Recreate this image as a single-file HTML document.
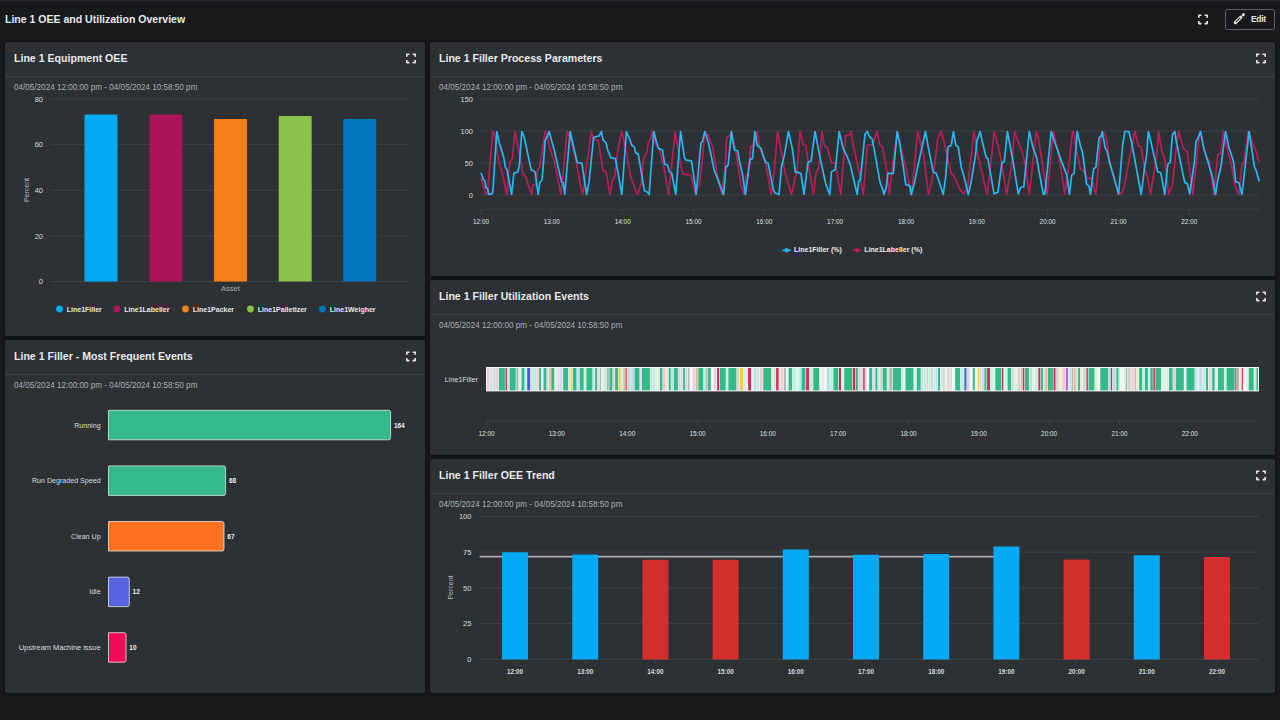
<!DOCTYPE html><html><head><meta charset="utf-8"><style>
html,body{margin:0;padding:0;width:1280px;height:720px;overflow:hidden;background:#18191b;font-family:"Liberation Sans", sans-serif;}
.p{position:absolute;background:#2d3134;border-radius:2px;box-shadow:0 0 2px 1px rgba(0,0,0,0.35);}
.hd{position:absolute;left:0;top:0;right:0;height:35px;border-bottom:1px solid #3a3f43;box-sizing:border-box;}
.tt{position:absolute;left:9px;top:10px;font-size:11.5px;font-weight:bold;color:#e9eaeb;white-space:nowrap;line-height:13px;transform:scaleX(0.92);transform-origin:0 0;}
.dt{position:absolute;left:9px;top:41px;font-size:8.15px;color:#abaeb1;white-space:nowrap;line-height:10px;}
svg text{font-family:"Liberation Sans", sans-serif;}
</style></head><body>
<div style="position:absolute;left:0;top:0;width:1280px;height:1px;background:#27292c"></div>
<div style="position:absolute;left:5px;top:13px;font-size:11.5px;font-weight:bold;color:#e9eaeb;white-space:nowrap;line-height:13px;transform:scaleX(0.915);transform-origin:0 0">Line 1 OEE and Utilization Overview</div>
<svg style="position:absolute;left:1198px;top:14px" width="10" height="11" viewBox="0 -0.4 10 11"><path d="M0.8 3.4V0.8H3.4M6.6 0.8H9.2V3.4M9.2 6.6V9.2H6.6M3.4 9.2H0.8V6.6" fill="none" stroke="#e6e6e6" stroke-width="1.6" stroke-linejoin="round"/></svg>
<div style="position:absolute;left:1225px;top:9px;width:50px;height:21px;box-sizing:border-box;border:1px solid #5d6064;border-radius:2.5px;"></div>
<svg style="position:absolute;left:1233px;top:13px" width="13" height="13" viewBox="0 0 13 13"><line x1="2.4" y1="9.6" x2="7.7" y2="4.3" stroke="#e6e6e6" stroke-width="3.3" stroke-linecap="round"/><line x1="2.9" y1="9.1" x2="7.3" y2="4.7" stroke="#2a2c2e" stroke-width="1.1"/><line x1="10" y1="2" x2="10.5" y2="1.5" stroke="#e6e6e6" stroke-width="2.7" stroke-linecap="round"/></svg>
<div style="position:absolute;left:1251px;top:14px;font-size:8.5px;font-weight:bold;letter-spacing:-0.35px;color:#e8e8e8;line-height:10px">Edit</div>

<div class="p" style="left:5px;top:42px;width:420px;height:294px"><div class="hd"></div><div class="tt">Line 1 Equipment OEE</div><div class="dt">04/05/2024 12:00:00 pm - 04/05/2024 10:58:50 pm</div><svg style="position:absolute;left:401px;top:11px" width="10" height="11" viewBox="0 -0.4 10 11"><path d="M0.8 3.4V0.8H3.4M6.6 0.8H9.2V3.4M9.2 6.6V9.2H6.6M3.4 9.2H0.8V6.6" fill="none" stroke="#e6e6e6" stroke-width="1.6" stroke-linejoin="round"/></svg></div>
<div class="p" style="left:5px;top:340px;width:420px;height:353px"><div class="hd"></div><div class="tt">Line 1 Filler - Most Frequent Events</div><div class="dt">04/05/2024 12:00:00 pm - 04/05/2024 10:58:50 pm</div><svg style="position:absolute;left:401px;top:11px" width="10" height="11" viewBox="0 -0.4 10 11"><path d="M0.8 3.4V0.8H3.4M6.6 0.8H9.2V3.4M9.2 6.6V9.2H6.6M3.4 9.2H0.8V6.6" fill="none" stroke="#e6e6e6" stroke-width="1.6" stroke-linejoin="round"/></svg></div>
<div class="p" style="left:430px;top:42px;width:845px;height:234px"><div class="hd"></div><div class="tt">Line 1 Filler Process Parameters</div><div class="dt">04/05/2024 12:00:00 pm - 04/05/2024 10:58:50 pm</div><svg style="position:absolute;left:826px;top:11px" width="10" height="11" viewBox="0 -0.4 10 11"><path d="M0.8 3.4V0.8H3.4M6.6 0.8H9.2V3.4M9.2 6.6V9.2H6.6M3.4 9.2H0.8V6.6" fill="none" stroke="#e6e6e6" stroke-width="1.6" stroke-linejoin="round"/></svg></div>
<div class="p" style="left:430px;top:280px;width:845px;height:175px"><div class="hd"></div><div class="tt">Line 1 Filler Utilization Events</div><div class="dt">04/05/2024 12:00:00 pm - 04/05/2024 10:58:50 pm</div><svg style="position:absolute;left:826px;top:11px" width="10" height="11" viewBox="0 -0.4 10 11"><path d="M0.8 3.4V0.8H3.4M6.6 0.8H9.2V3.4M9.2 6.6V9.2H6.6M3.4 9.2H0.8V6.6" fill="none" stroke="#e6e6e6" stroke-width="1.6" stroke-linejoin="round"/></svg></div>
<div class="p" style="left:430px;top:459px;width:845px;height:234px"><div class="hd"></div><div class="tt">Line 1 Filler OEE Trend</div><div class="dt">04/05/2024 12:00:00 pm - 04/05/2024 10:58:50 pm</div><svg style="position:absolute;left:826px;top:11px" width="10" height="11" viewBox="0 -0.4 10 11"><path d="M0.8 3.4V0.8H3.4M6.6 0.8H9.2V3.4M9.2 6.6V9.2H6.6M3.4 9.2H0.8V6.6" fill="none" stroke="#e6e6e6" stroke-width="1.6" stroke-linejoin="round"/></svg></div>
<svg style="position:absolute;left:0;top:0" width="1280" height="720" viewBox="0 0 1280 720"><line x1="50.5" y1="99.0" x2="409.5" y2="99.0" stroke="#3d4146" stroke-width="1"/><text x="43" y="101.6" font-size="7.5" fill="#dadcde" text-anchor="end">80</text><line x1="50.5" y1="144.6" x2="409.5" y2="144.6" stroke="#3d4146" stroke-width="1"/><text x="43" y="147.2" font-size="7.5" fill="#dadcde" text-anchor="end">60</text><line x1="50.5" y1="190.2" x2="409.5" y2="190.2" stroke="#3d4146" stroke-width="1"/><text x="43" y="192.8" font-size="7.5" fill="#dadcde" text-anchor="end">40</text><line x1="50.5" y1="235.9" x2="409.5" y2="235.9" stroke="#3d4146" stroke-width="1"/><text x="43" y="238.5" font-size="7.5" fill="#dadcde" text-anchor="end">20</text><line x1="50.5" y1="281.5" x2="409.5" y2="281.5" stroke="#3d4146" stroke-width="1"/><text x="43" y="284.1" font-size="7.5" fill="#dadcde" text-anchor="end">0</text><path d="M84.5 281.5 V115.5 Q84.5 114.5 85.5 114.5 H116.5 Q117.5 114.5 117.5 115.5 V281.5 Z" fill="#03a9f4"/><path d="M149.5 281.5 V115.5 Q149.5 114.5 150.5 114.5 H181.2 Q182.2 114.5 182.2 115.5 V281.5 Z" fill="#ad1457"/><path d="M214 281.5 V120 Q214 119 215 119 H246 Q247 119 247 120 V281.5 Z" fill="#f57f17"/><path d="M278.7 281.5 V117 Q278.7 116 279.7 116 H310.7 Q311.7 116 311.7 117 V281.5 Z" fill="#8bc34a"/><path d="M343.2 281.5 V120 Q343.2 119 344.2 119 H375.2 Q376.2 119 376.2 120 V281.5 Z" fill="#0277bd"/><text x="230.5" y="290.5" font-size="7.5" fill="#a9acaf" text-anchor="middle">Asset</text><text transform="translate(28.5,190) rotate(-90)" font-size="7" fill="#b9bbbe" text-anchor="middle">Percent</text><circle cx="59.5" cy="309" r="3.4" fill="#03a9f4"/><text x="66.8" y="311.6" font-size="7" font-weight="bold" fill="#e8e8e8">Line1Filler</text><circle cx="117" cy="309" r="3.4" fill="#ad1457"/><text x="124.3" y="311.6" font-size="7" font-weight="bold" fill="#e8e8e8">Line1Labeller</text><circle cx="185.5" cy="309" r="3.4" fill="#f57f17"/><text x="192.8" y="311.6" font-size="7" font-weight="bold" fill="#e8e8e8">Line1Packer</text><circle cx="250.5" cy="309" r="3.4" fill="#8bc34a"/><text x="257.8" y="311.6" font-size="7" font-weight="bold" fill="#e8e8e8">Line1Palletizer</text><circle cx="322.5" cy="309" r="3.4" fill="#0277bd"/><text x="329.8" y="311.6" font-size="7" font-weight="bold" fill="#e8e8e8">Line1Weigher</text><path d="M108.5 410.3 H388.6 Q390.6 410.3 390.6 412.3 V437.8 Q390.6 439.8 388.6 439.8 H108.5 Z" fill="#33b98a" stroke="#e8f0ec" stroke-opacity="0.75" stroke-width="1"/><text x="100.6" y="427.6" font-size="7.1" fill="#dadcde" text-anchor="end">Running</text><text x="393.9" y="427.6" font-size="6.5" font-weight="bold" fill="#f0f0f0">164</text><path d="M108.5 465.9 H223.6 Q225.6 465.9 225.6 467.9 V493.4 Q225.6 495.4 223.6 495.4 H108.5 Z" fill="#33b98a" stroke="#e8f0ec" stroke-opacity="0.75" stroke-width="1"/><text x="100.6" y="483.2" font-size="7.1" fill="#dadcde" text-anchor="end">Run Degraded Speed</text><text x="228.9" y="483.2" font-size="6.5" font-weight="bold" fill="#f0f0f0">68</text><path d="M108.5 521.5 H222.0 Q224.0 521.5 224.0 523.5 V549.0 Q224.0 551.0 222.0 551.0 H108.5 Z" fill="#ff7020" stroke="#e8f0ec" stroke-opacity="0.75" stroke-width="1"/><text x="100.6" y="538.8" font-size="7.1" fill="#dadcde" text-anchor="end">Clean Up</text><text x="227.3" y="538.8" font-size="6.5" font-weight="bold" fill="#f0f0f0">67</text><path d="M108.5 577.1 H127.3 Q129.3 577.1 129.3 579.1 V604.6 Q129.3 606.6 127.3 606.6 H108.5 Z" fill="#5763e0" stroke="#e8f0ec" stroke-opacity="0.75" stroke-width="1"/><text x="100.6" y="594.4" font-size="7.1" fill="#dadcde" text-anchor="end">Idle</text><text x="132.6" y="594.4" font-size="6.5" font-weight="bold" fill="#f0f0f0">12</text><path d="M108.5 632.7 H124.0 Q126.0 632.7 126.0 634.7 V660.2 Q126.0 662.2 124.0 662.2 H108.5 Z" fill="#f50a57" stroke="#e8f0ec" stroke-opacity="0.75" stroke-width="1"/><text x="100.6" y="650.0" font-size="7.45" fill="#dadcde" text-anchor="end">Upstream Machine issue</text><text x="129.3" y="650.0" font-size="6.5" font-weight="bold" fill="#f0f0f0">10</text><line x1="480.5" y1="98.9" x2="1259" y2="98.9" stroke="#3d4146" stroke-width="1"/><text x="472.9" y="101.6" font-size="7.4" fill="#dadcde" text-anchor="end">150</text><line x1="480.5" y1="131.0" x2="1259" y2="131.0" stroke="#3d4146" stroke-width="1"/><text x="472.9" y="133.7" font-size="7.4" fill="#dadcde" text-anchor="end">100</text><line x1="480.5" y1="163.0" x2="1259" y2="163.0" stroke="#3d4146" stroke-width="1"/><text x="472.9" y="165.7" font-size="7.4" fill="#dadcde" text-anchor="end">50</text><line x1="480.5" y1="195.1" x2="1259" y2="195.1" stroke="#3d4146" stroke-width="1"/><text x="472.9" y="197.8" font-size="7.4" fill="#dadcde" text-anchor="end">0</text><line x1="480.5" y1="209.2" x2="1259" y2="209.2" stroke="#3d4146" stroke-width="1"/><line x1="481.0" y1="209.2" x2="481.0" y2="215" stroke="#3d4146" stroke-width="1"/><text x="481.0" y="224" font-size="6.4" fill="#dfe1e3" text-anchor="middle">12:00</text><line x1="551.8" y1="209.2" x2="551.8" y2="215" stroke="#3d4146" stroke-width="1"/><text x="551.8" y="224" font-size="6.4" fill="#dfe1e3" text-anchor="middle">13:00</text><line x1="622.7" y1="209.2" x2="622.7" y2="215" stroke="#3d4146" stroke-width="1"/><text x="622.7" y="224" font-size="6.4" fill="#dfe1e3" text-anchor="middle">14:00</text><line x1="693.5" y1="209.2" x2="693.5" y2="215" stroke="#3d4146" stroke-width="1"/><text x="693.5" y="224" font-size="6.4" fill="#dfe1e3" text-anchor="middle">15:00</text><line x1="764.3" y1="209.2" x2="764.3" y2="215" stroke="#3d4146" stroke-width="1"/><text x="764.3" y="224" font-size="6.4" fill="#dfe1e3" text-anchor="middle">16:00</text><line x1="835.1" y1="209.2" x2="835.1" y2="215" stroke="#3d4146" stroke-width="1"/><text x="835.1" y="224" font-size="6.4" fill="#dfe1e3" text-anchor="middle">17:00</text><line x1="906.0" y1="209.2" x2="906.0" y2="215" stroke="#3d4146" stroke-width="1"/><text x="906.0" y="224" font-size="6.4" fill="#dfe1e3" text-anchor="middle">18:00</text><line x1="976.8" y1="209.2" x2="976.8" y2="215" stroke="#3d4146" stroke-width="1"/><text x="976.8" y="224" font-size="6.4" fill="#dfe1e3" text-anchor="middle">19:00</text><line x1="1047.6" y1="209.2" x2="1047.6" y2="215" stroke="#3d4146" stroke-width="1"/><text x="1047.6" y="224" font-size="6.4" fill="#dfe1e3" text-anchor="middle">20:00</text><line x1="1118.5" y1="209.2" x2="1118.5" y2="215" stroke="#3d4146" stroke-width="1"/><text x="1118.5" y="224" font-size="6.4" fill="#dfe1e3" text-anchor="middle">21:00</text><line x1="1189.3" y1="209.2" x2="1189.3" y2="215" stroke="#3d4146" stroke-width="1"/><text x="1189.3" y="224" font-size="6.4" fill="#dfe1e3" text-anchor="middle">22:00</text><polyline fill="none" stroke="#b81d5a" stroke-width="1.7" stroke-linejoin="round" points="481.1,178.1 485.8,194.5 487.4,193.8 492.8,131.5 494.4,134.4 497.5,153.1 499.1,164.1 501.4,168.8 506.9,194.5 510.0,161.7 512.4,158.6 515.0,131.5 519.4,153.1 523.3,175.0 525.7,176.6 528.0,184.4 531.9,194.5 532.7,185.2 535.8,184.4 537.4,170.3 539.7,167.2 545.2,131.5 547.5,135.9 549.9,148.4 554.6,162.5 560.8,194.5 563.2,173.4 567.1,131.5 570.2,137.5 576.4,162.5 580.3,184.4 582.7,194.5 585.8,171.9 591.3,131.5 593.6,139.1 598.3,140.6 603.0,170.3 606.1,171.9 610.0,194.5 612.4,181.2 614.7,176.6 617.8,150.0 621.8,131.5 624.9,145.3 631.1,178.1 637.4,194.5 641.3,182.8 643.6,157.8 646.8,153.1 648.3,142.2 650.7,139.1 652.2,131.5 655.3,143.8 659.2,148.4 663.9,167.2 668.6,194.5 672.0,162.5 675.1,131.5 680.6,164.1 682.9,174.2 690.8,175.0 695.4,194.5 697.0,187.5 699.3,185.9 702.5,157.8 704.8,131.5 707.9,134.4 712.6,146.9 717.3,175.0 722.0,194.5 725.1,165.6 726.7,137.5 729.8,135.9 731.4,131.5 736.1,153.1 740.8,184.4 743.9,194.5 746.2,175.8 747.8,174.2 750.9,146.1 754.0,145.3 757.2,131.5 759.5,146.9 765.8,164.1 771.2,194.5 774.3,170.3 777.5,131.5 781.4,152.3 785.3,173.4 791.5,194.5 795.4,176.6 797.0,171.9 800.1,131.5 803.2,144.5 805.6,145.3 809.5,170.3 813.4,194.5 815.8,173.4 818.9,168.0 822.0,131.5 824.3,145.3 827.5,148.4 831.4,162.5 835.3,163.3 840.8,194.5 845.4,135.9 850.1,134.4 850.9,131.5 853.2,145.3 858.7,170.3 863.4,194.5 867.3,145.3 873.0,144.5 876.9,131.5 880.1,145.3 882.4,146.9 886.3,167.2 889.4,194.5 891.8,171.9 894.1,156.2 897.2,131.5 900.4,145.3 905.1,164.1 911.3,194.5 914.4,167.2 917.6,131.5 923.8,156.2 928.5,194.5 933.2,175.0 937.9,138.3 941.0,131.5 944.1,142.2 947.2,156.2 951.2,173.4 954.3,176.6 959.8,189.1 963.7,193.8 967.6,187.5 973.8,131.5 978.5,157.8 983.2,178.1 987.1,194.5 991.0,162.5 994.1,131.5 998.8,148.4 1001.9,164.1 1006.6,194.5 1012.1,162.5 1014.4,131.5 1018.3,142.2 1022.2,151.6 1025.4,165.6 1029.3,194.5 1036.3,131.5 1037.9,135.9 1041.0,154.7 1047.2,194.5 1053.5,131.5 1059.8,160.9 1064.7,194.5 1069.4,160.9 1072.5,131.5 1074.1,132.8 1075.6,145.3 1080.3,168.8 1083.4,170.3 1087.3,178.1 1091.2,178.1 1095.9,194.5 1099.8,148.4 1102.2,131.5 1105.3,134.4 1106.9,140.6 1110.0,162.5 1118.6,194.5 1122.5,192.2 1125.6,179.7 1129.5,157.8 1135.0,131.5 1138.1,145.3 1141.2,146.9 1144.4,168.8 1147.5,176.6 1150.6,194.5 1156.9,153.1 1158.4,131.5 1161.6,150.0 1164.7,159.4 1168.6,194.5 1172.5,184.4 1175.6,153.1 1178.8,131.5 1183.4,148.4 1187.3,151.6 1192.8,194.5 1196.7,159.4 1199.8,131.5 1206.1,156.2 1209.2,160.9 1213.9,194.5 1217.8,154.7 1220.9,153.1 1223.3,131.5 1228.0,151.6 1231.9,167.2 1235.0,185.9 1238.9,194.5 1242.0,164.1 1243.6,163.3 1248.3,131.5 1252.2,142.2 1256.1,151.6 1259.2,162.5"/><polyline fill="none" stroke="#29b6f6" stroke-width="1.7" stroke-linejoin="round" points="481.1,172.7 483.5,179.7 485.0,181.2 485.8,187.5 487.4,188.3 488.9,194.5 492.1,193.8 492.8,192.2 496.8,131.5 499.1,142.2 503.8,157.8 505.3,167.2 506.9,169.5 511.6,194.5 513.9,173.4 517.8,171.9 519.4,164.8 521.8,131.5 523.3,134.4 524.9,140.6 531.1,169.5 535.0,171.9 538.2,194.5 539.7,182.8 542.1,179.7 545.2,140.6 547.5,135.9 549.1,131.5 554.6,151.6 561.6,182.0 563.2,182.8 564.7,194.5 570.2,131.5 572.5,142.2 577.2,162.5 581.9,163.3 586.6,194.5 588.9,182.8 593.6,137.5 599.1,135.9 601.4,131.5 603.0,139.8 606.1,143.0 607.7,150.0 610.8,157.8 615.5,158.6 621.8,194.5 626.4,131.5 629.6,139.1 631.9,145.3 634.2,146.9 635.8,153.1 638.2,153.9 644.4,190.6 647.5,192.2 649.1,194.5 653.8,131.5 656.1,140.6 658.5,148.4 662.4,150.0 664.7,164.1 667.8,165.6 669.4,171.9 671.8,173.4 675.7,194.5 680.6,131.5 684.5,157.8 686.1,160.2 691.5,160.9 695.4,187.5 696.2,194.5 700.9,143.0 702.5,141.4 704.8,131.5 708.7,143.8 714.2,170.3 717.3,178.1 723.6,194.5 725.9,167.2 728.2,164.8 731.4,131.5 734.5,150.0 737.6,150.8 740.8,167.2 742.3,173.4 745.4,194.5 750.1,159.4 752.5,158.6 754.8,131.5 757.2,145.3 761.1,148.4 762.6,153.9 765.8,162.5 768.1,163.3 773.6,190.6 775.1,193.0 779.0,194.5 781.4,167.2 784.5,154.7 788.4,131.5 792.3,148.4 795.4,171.9 800.9,173.4 804.0,194.5 807.9,162.5 811.1,160.9 815.0,131.5 820.4,159.4 825.9,184.4 829.8,194.5 831.4,171.9 835.3,169.5 839.2,131.5 843.1,148.4 847.0,156.2 850.1,164.1 857.2,194.5 858.7,181.2 860.3,179.7 865.0,134.4 867.3,131.5 868.9,135.9 872.2,139.1 875.4,156.2 880.1,182.8 883.2,190.6 884.0,194.5 886.3,187.5 887.9,173.4 893.3,173.4 897.2,131.5 899.6,142.2 905.8,184.4 909.8,185.9 911.3,194.5 914.4,182.8 917.6,167.2 920.7,153.1 925.4,131.5 928.5,148.4 933.2,171.9 936.3,173.4 939.4,182.8 943.3,194.5 945.7,176.6 948.0,146.9 951.2,145.3 953.5,131.5 955.8,145.3 958.2,146.9 961.3,167.2 964.4,178.1 968.3,194.5 970.7,184.4 975.4,156.2 976.9,140.6 980.1,131.5 982.4,142.2 986.3,157.8 987.9,158.6 994.1,193.8 998.0,192.2 1001.9,162.5 1004.3,161.7 1007.4,131.5 1012.9,160.9 1018.3,193.8 1020.7,187.5 1023.8,186.7 1029.3,131.5 1033.2,148.4 1036.3,156.2 1043.3,194.5 1044.9,193.8 1051.2,131.5 1055.8,145.3 1058.2,151.6 1061.3,160.9 1067.0,175.8 1069.4,194.5 1071.7,175.0 1074.1,173.4 1077.2,131.5 1080.3,145.3 1082.7,153.1 1086.6,184.4 1088.9,185.9 1090.5,194.5 1093.6,168.8 1095.9,167.2 1099.1,137.5 1101.4,135.9 1102.2,131.5 1105.3,148.4 1106.9,150.8 1110.0,164.1 1118.6,193.8 1122.5,146.9 1124.8,131.5 1128.8,131.5 1131.9,143.8 1141.2,194.5 1144.4,168.8 1146.7,154.7 1148.3,131.5 1150.6,140.6 1157.7,171.9 1160.8,172.7 1164.7,194.5 1167.8,164.1 1170.2,162.5 1172.5,134.4 1174.8,131.5 1176.4,142.2 1183.4,176.6 1185.0,182.8 1187.3,183.6 1189.7,193.8 1194.4,162.5 1195.9,142.2 1197.5,139.1 1200.6,131.5 1203.8,148.4 1207.7,160.9 1212.3,176.6 1215.5,194.5 1217.8,179.7 1220.9,167.2 1224.1,142.2 1225.6,131.5 1228.8,146.9 1233.4,160.9 1235.8,182.0 1238.9,182.8 1242.0,194.5 1245.9,159.4 1249.1,131.5 1254.5,167.2 1256.1,170.3 1259.2,181.2"/><line x1="782" y1="250.3" x2="791.2" y2="250.3" stroke="#29b6f6" stroke-width="1.3"/><circle cx="786.6" cy="250.3" r="2.3" fill="#29b6f6"/><text x="794" y="252.4" font-size="7" font-weight="bold" fill="#eeeeee">Line1Filler (%)</text><line x1="852.3" y1="250.3" x2="861.6" y2="250.3" stroke="#b81d5a" stroke-width="1.3"/><circle cx="857" cy="250.3" r="2.3" fill="#b81d5a"/><text x="864.3" y="252.4" font-size="7" font-weight="bold" fill="#eeeeee">Line1Labeller (%)</text><text x="478" y="381.5" font-size="7.2" fill="#dadcde" text-anchor="end">Line1Filler</text><line x1="486" y1="421" x2="1259" y2="421" stroke="#3d4146" stroke-width="1"/><line x1="486.5" y1="421" x2="486.5" y2="425" stroke="#3d4146" stroke-width="1"/><text x="486.5" y="435.5" font-size="6.4" fill="#dfe1e3" text-anchor="middle">12:00</text><line x1="556.8" y1="421" x2="556.8" y2="425" stroke="#3d4146" stroke-width="1"/><text x="556.8" y="435.5" font-size="6.4" fill="#dfe1e3" text-anchor="middle">13:00</text><line x1="627.2" y1="421" x2="627.2" y2="425" stroke="#3d4146" stroke-width="1"/><text x="627.2" y="435.5" font-size="6.4" fill="#dfe1e3" text-anchor="middle">14:00</text><line x1="697.5" y1="421" x2="697.5" y2="425" stroke="#3d4146" stroke-width="1"/><text x="697.5" y="435.5" font-size="6.4" fill="#dfe1e3" text-anchor="middle">15:00</text><line x1="767.8" y1="421" x2="767.8" y2="425" stroke="#3d4146" stroke-width="1"/><text x="767.8" y="435.5" font-size="6.4" fill="#dfe1e3" text-anchor="middle">16:00</text><line x1="838.1" y1="421" x2="838.1" y2="425" stroke="#3d4146" stroke-width="1"/><text x="838.1" y="435.5" font-size="6.4" fill="#dfe1e3" text-anchor="middle">17:00</text><line x1="908.5" y1="421" x2="908.5" y2="425" stroke="#3d4146" stroke-width="1"/><text x="908.5" y="435.5" font-size="6.4" fill="#dfe1e3" text-anchor="middle">18:00</text><line x1="978.8" y1="421" x2="978.8" y2="425" stroke="#3d4146" stroke-width="1"/><text x="978.8" y="435.5" font-size="6.4" fill="#dfe1e3" text-anchor="middle">19:00</text><line x1="1049.1" y1="421" x2="1049.1" y2="425" stroke="#3d4146" stroke-width="1"/><text x="1049.1" y="435.5" font-size="6.4" fill="#dfe1e3" text-anchor="middle">20:00</text><line x1="1119.5" y1="421" x2="1119.5" y2="425" stroke="#3d4146" stroke-width="1"/><text x="1119.5" y="435.5" font-size="6.4" fill="#dfe1e3" text-anchor="middle">21:00</text><line x1="1189.8" y1="421" x2="1189.8" y2="425" stroke="#3d4146" stroke-width="1"/><text x="1189.8" y="435.5" font-size="6.4" fill="#dfe1e3" text-anchor="middle">22:00</text><rect x="486" y="367" width="773" height="24.4" fill="#f4f6f5"/><rect x="487.0" y="368" width="2.5" height="22.4" fill="#f5c5d3"/><rect x="490.1" y="368" width="2.5" height="22.4" fill="#bdeed8"/><rect x="493.2" y="368" width="2.5" height="22.4" fill="#e3d0f0"/><rect x="496.3" y="368" width="2.0" height="22.4" fill="#f5c5d3"/><rect x="498.9" y="368" width="6.0" height="22.4" fill="#33b98a"/><rect x="505.5" y="368" width="1.5" height="22.4" fill="#cf2d5c"/><rect x="507.6" y="368" width="1.5" height="22.4" fill="#f5c5d3"/><rect x="509.7" y="368" width="6.0" height="22.4" fill="#33b98a"/><rect x="516.3" y="368" width="2.0" height="22.4" fill="#b0b3ae"/><rect x="518.9" y="368" width="2.0" height="22.4" fill="#d5f5e6"/><rect x="521.5" y="368" width="3.0" height="22.4" fill="#33b98a"/><rect x="525.1" y="368" width="1.5" height="22.4" fill="#bdeed8"/><rect x="527.2" y="368" width="3.0" height="22.4" fill="#4a55d8"/><rect x="530.8" y="368" width="3.0" height="22.4" fill="#bdeed8"/><rect x="534.4" y="368" width="1.5" height="22.4" fill="#b8dfe9"/><rect x="536.5" y="368" width="2.0" height="22.4" fill="#f5c5d3"/><rect x="539.1" y="368" width="2.0" height="22.4" fill="#33b98a"/><rect x="541.7" y="368" width="1.2" height="22.4" fill="#f7f7f2"/><rect x="543.5" y="368" width="3.0" height="22.4" fill="#33b98a"/><rect x="547.1" y="368" width="1.5" height="22.4" fill="#e3d0f0"/><rect x="549.2" y="368" width="1.5" height="22.4" fill="#f2b088"/><rect x="551.3" y="368" width="3.0" height="22.4" fill="#33b98a"/><rect x="554.9" y="368" width="2.5" height="22.4" fill="#d5f5e6"/><rect x="558.0" y="368" width="1.5" height="22.4" fill="#f5c5d3"/><rect x="560.1" y="368" width="2.5" height="22.4" fill="#e3d0f0"/><rect x="563.2" y="368" width="5.0" height="22.4" fill="#33b98a"/><rect x="568.8" y="368" width="1.5" height="22.4" fill="#bdeed8"/><rect x="570.9" y="368" width="1.5" height="22.4" fill="#f2cd4a"/><rect x="573.0" y="368" width="3.5" height="22.4" fill="#33b98a"/><rect x="577.1" y="368" width="2.0" height="22.4" fill="#b8dfe9"/><rect x="579.7" y="368" width="4.0" height="22.4" fill="#33b98a"/><rect x="584.3" y="368" width="1.5" height="22.4" fill="#bdeed8"/><rect x="586.4" y="368" width="6.0" height="22.4" fill="#33b98a"/><rect x="593.0" y="368" width="1.5" height="22.4" fill="#bdeed8"/><rect x="595.1" y="368" width="2.0" height="22.4" fill="#33b98a"/><rect x="597.7" y="368" width="1.5" height="22.4" fill="#e3d0f0"/><rect x="599.8" y="368" width="1.2" height="22.4" fill="#b0b3ae"/><rect x="601.6" y="368" width="2.0" height="22.4" fill="#d5f5e6"/><rect x="604.2" y="368" width="2.0" height="22.4" fill="#bdeed8"/><rect x="606.8" y="368" width="2.0" height="22.4" fill="#b0b3ae"/><rect x="609.4" y="368" width="3.0" height="22.4" fill="#33b98a"/><rect x="613.0" y="368" width="1.5" height="22.4" fill="#f5c5d3"/><rect x="615.1" y="368" width="3.0" height="22.4" fill="#33b98a"/><rect x="618.7" y="368" width="2.0" height="22.4" fill="#f2cd4a"/><rect x="621.3" y="368" width="1.5" height="22.4" fill="#bdeed8"/><rect x="623.4" y="368" width="1.5" height="22.4" fill="#f2b088"/><rect x="625.5" y="368" width="1.2" height="22.4" fill="#cf2d5c"/><rect x="627.3" y="368" width="3.0" height="22.4" fill="#c8d8d0"/><rect x="630.9" y="368" width="3.0" height="22.4" fill="#b8dfe9"/><rect x="634.5" y="368" width="5.0" height="22.4" fill="#33b98a"/><rect x="640.1" y="368" width="1.2" height="22.4" fill="#e3d0f0"/><rect x="641.9" y="368" width="8.0" height="22.4" fill="#33b98a"/><rect x="650.5" y="368" width="1.5" height="22.4" fill="#c8d8d0"/><rect x="652.6" y="368" width="2.5" height="22.4" fill="#bdeed8"/><rect x="655.7" y="368" width="1.5" height="22.4" fill="#d5f5e6"/><rect x="657.8" y="368" width="1.5" height="22.4" fill="#efe8c6"/><rect x="659.9" y="368" width="2.5" height="22.4" fill="#33b98a"/><rect x="663.0" y="368" width="2.5" height="22.4" fill="#f5c5d3"/><rect x="666.1" y="368" width="2.0" height="22.4" fill="#efe8c6"/><rect x="668.7" y="368" width="2.0" height="22.4" fill="#33b98a"/><rect x="671.3" y="368" width="2.0" height="22.4" fill="#c8d8d0"/><rect x="673.9" y="368" width="4.0" height="22.4" fill="#33b98a"/><rect x="678.5" y="368" width="2.0" height="22.4" fill="#b8dfe9"/><rect x="681.1" y="368" width="1.5" height="22.4" fill="#f5c5d3"/><rect x="683.2" y="368" width="2.0" height="22.4" fill="#33b98a"/><rect x="685.8" y="368" width="1.5" height="22.4" fill="#b8dfe9"/><rect x="687.9" y="368" width="1.5" height="22.4" fill="#b0b3ae"/><rect x="690.0" y="368" width="2.0" height="22.4" fill="#f7f7f2"/><rect x="692.6" y="368" width="2.5" height="22.4" fill="#e3d0f0"/><rect x="695.7" y="368" width="2.0" height="22.4" fill="#f2b088"/><rect x="698.3" y="368" width="5.0" height="22.4" fill="#33b98a"/><rect x="703.9" y="368" width="1.2" height="22.4" fill="#bdeed8"/><rect x="705.7" y="368" width="1.5" height="22.4" fill="#b0b3ae"/><rect x="707.8" y="368" width="3.0" height="22.4" fill="#33b98a"/><rect x="711.4" y="368" width="2.0" height="22.4" fill="#f7f7f2"/><rect x="714.0" y="368" width="2.5" height="22.4" fill="#e3d0f0"/><rect x="717.1" y="368" width="2.0" height="22.4" fill="#cf2d5c"/><rect x="719.7" y="368" width="6.0" height="22.4" fill="#33b98a"/><rect x="726.3" y="368" width="1.5" height="22.4" fill="#bdeed8"/><rect x="728.4" y="368" width="8.0" height="22.4" fill="#33b98a"/><rect x="737.0" y="368" width="2.5" height="22.4" fill="#e3d0f0"/><rect x="740.1" y="368" width="3.0" height="22.4" fill="#f2cd4a"/><rect x="743.7" y="368" width="1.2" height="22.4" fill="#bdeed8"/><rect x="745.5" y="368" width="2.0" height="22.4" fill="#d5f5e6"/><rect x="748.1" y="368" width="3.0" height="22.4" fill="#cf2d5c"/><rect x="751.7" y="368" width="1.2" height="22.4" fill="#d5f5e6"/><rect x="753.5" y="368" width="3.0" height="22.4" fill="#b8dfe9"/><rect x="757.1" y="368" width="2.0" height="22.4" fill="#bdeed8"/><rect x="759.7" y="368" width="3.0" height="22.4" fill="#f5c5d3"/><rect x="763.3" y="368" width="8.0" height="22.4" fill="#33b98a"/><rect x="771.9" y="368" width="1.5" height="22.4" fill="#efe8c6"/><rect x="774.0" y="368" width="1.5" height="22.4" fill="#b8dfe9"/><rect x="776.1" y="368" width="2.5" height="22.4" fill="#cf2d5c"/><rect x="779.2" y="368" width="1.5" height="22.4" fill="#efe8c6"/><rect x="781.3" y="368" width="2.0" height="22.4" fill="#f5c5d3"/><rect x="783.9" y="368" width="2.0" height="22.4" fill="#b0b3ae"/><rect x="786.5" y="368" width="1.5" height="22.4" fill="#d5f5e6"/><rect x="788.6" y="368" width="3.5" height="22.4" fill="#33b98a"/><rect x="792.7" y="368" width="3.0" height="22.4" fill="#bdeed8"/><rect x="796.3" y="368" width="2.5" height="22.4" fill="#d5f5e6"/><rect x="799.4" y="368" width="1.5" height="22.4" fill="#b8dfe9"/><rect x="801.5" y="368" width="4.0" height="22.4" fill="#33b98a"/><rect x="806.1" y="368" width="3.0" height="22.4" fill="#cf2d5c"/><rect x="809.7" y="368" width="3.0" height="22.4" fill="#bdeed8"/><rect x="813.3" y="368" width="6.0" height="22.4" fill="#33b98a"/><rect x="819.9" y="368" width="1.5" height="22.4" fill="#f7f7f2"/><rect x="822.0" y="368" width="2.0" height="22.4" fill="#d5f5e6"/><rect x="824.6" y="368" width="1.5" height="22.4" fill="#f7f7f2"/><rect x="826.7" y="368" width="3.0" height="22.4" fill="#b8dfe9"/><rect x="830.3" y="368" width="2.5" height="22.4" fill="#bdeed8"/><rect x="833.4" y="368" width="5.0" height="22.4" fill="#33b98a"/><rect x="839.0" y="368" width="2.0" height="22.4" fill="#cf2d5c"/><rect x="841.6" y="368" width="2.0" height="22.4" fill="#d5f5e6"/><rect x="844.2" y="368" width="8.0" height="22.4" fill="#33b98a"/><rect x="852.8" y="368" width="2.5" height="22.4" fill="#cf2d5c"/><rect x="855.9" y="368" width="2.0" height="22.4" fill="#33b98a"/><rect x="858.5" y="368" width="2.0" height="22.4" fill="#c8d8d0"/><rect x="861.1" y="368" width="1.5" height="22.4" fill="#f5c5d3"/><rect x="863.2" y="368" width="1.5" height="22.4" fill="#cf2d5c"/><rect x="865.3" y="368" width="1.2" height="22.4" fill="#f5c5d3"/><rect x="867.1" y="368" width="1.5" height="22.4" fill="#f7f7f2"/><rect x="869.2" y="368" width="3.0" height="22.4" fill="#33b98a"/><rect x="872.8" y="368" width="2.0" height="22.4" fill="#e3d0f0"/><rect x="875.4" y="368" width="2.0" height="22.4" fill="#33b98a"/><rect x="878.0" y="368" width="1.5" height="22.4" fill="#bdeed8"/><rect x="880.1" y="368" width="2.0" height="22.4" fill="#c8d8d0"/><rect x="882.7" y="368" width="4.0" height="22.4" fill="#33b98a"/><rect x="887.3" y="368" width="1.5" height="22.4" fill="#bdeed8"/><rect x="889.4" y="368" width="3.0" height="22.4" fill="#b0b3ae"/><rect x="893.0" y="368" width="8.0" height="22.4" fill="#33b98a"/><rect x="901.6" y="368" width="1.2" height="22.4" fill="#bdeed8"/><rect x="903.4" y="368" width="1.5" height="22.4" fill="#d5f5e6"/><rect x="905.5" y="368" width="8.0" height="22.4" fill="#33b98a"/><rect x="914.1" y="368" width="2.0" height="22.4" fill="#d5f5e6"/><rect x="916.7" y="368" width="4.0" height="22.4" fill="#33b98a"/><rect x="921.3" y="368" width="2.0" height="22.4" fill="#b8dfe9"/><rect x="923.9" y="368" width="2.0" height="22.4" fill="#bdeed8"/><rect x="926.5" y="368" width="1.5" height="22.4" fill="#f5c5d3"/><rect x="928.6" y="368" width="1.5" height="22.4" fill="#bdeed8"/><rect x="930.7" y="368" width="2.0" height="22.4" fill="#c8d8d0"/><rect x="933.3" y="368" width="1.5" height="22.4" fill="#bdeed8"/><rect x="935.4" y="368" width="2.0" height="22.4" fill="#e3d0f0"/><rect x="938.0" y="368" width="2.0" height="22.4" fill="#33b98a"/><rect x="940.6" y="368" width="1.5" height="22.4" fill="#bdeed8"/><rect x="942.7" y="368" width="2.0" height="22.4" fill="#c8d8d0"/><rect x="945.3" y="368" width="1.5" height="22.4" fill="#d5f5e6"/><rect x="947.4" y="368" width="2.0" height="22.4" fill="#f5c5d3"/><rect x="950.0" y="368" width="2.0" height="22.4" fill="#bdeed8"/><rect x="952.6" y="368" width="2.0" height="22.4" fill="#f7f7f2"/><rect x="955.2" y="368" width="5.0" height="22.4" fill="#33b98a"/><rect x="960.8" y="368" width="3.0" height="22.4" fill="#bdeed8"/><rect x="964.4" y="368" width="2.0" height="22.4" fill="#4a55d8"/><rect x="967.0" y="368" width="2.5" height="22.4" fill="#c8d8d0"/><rect x="970.1" y="368" width="2.0" height="22.4" fill="#f7f7f2"/><rect x="972.7" y="368" width="2.0" height="22.4" fill="#33b98a"/><rect x="975.3" y="368" width="2.0" height="22.4" fill="#f7f7f2"/><rect x="977.9" y="368" width="1.5" height="22.4" fill="#f2cd4a"/><rect x="980.0" y="368" width="1.2" height="22.4" fill="#bdeed8"/><rect x="981.8" y="368" width="2.0" height="22.4" fill="#f5c5d3"/><rect x="984.4" y="368" width="2.0" height="22.4" fill="#33b98a"/><rect x="987.0" y="368" width="3.0" height="22.4" fill="#cf2d5c"/><rect x="990.6" y="368" width="2.0" height="22.4" fill="#bdeed8"/><rect x="993.2" y="368" width="1.5" height="22.4" fill="#d5f5e6"/><rect x="995.3" y="368" width="6.0" height="22.4" fill="#33b98a"/><rect x="1001.9" y="368" width="1.5" height="22.4" fill="#cf2d5c"/><rect x="1004.0" y="368" width="3.0" height="22.4" fill="#d5f5e6"/><rect x="1007.6" y="368" width="3.5" height="22.4" fill="#33b98a"/><rect x="1011.7" y="368" width="2.0" height="22.4" fill="#c8d8d0"/><rect x="1014.3" y="368" width="3.0" height="22.4" fill="#d5f5e6"/><rect x="1017.9" y="368" width="2.5" height="22.4" fill="#c8d8d0"/><rect x="1021.0" y="368" width="1.2" height="22.4" fill="#f2b088"/><rect x="1022.8" y="368" width="1.5" height="22.4" fill="#cf2d5c"/><rect x="1024.9" y="368" width="4.0" height="22.4" fill="#33b98a"/><rect x="1029.5" y="368" width="2.5" height="22.4" fill="#c8d8d0"/><rect x="1032.6" y="368" width="2.0" height="22.4" fill="#d5f5e6"/><rect x="1035.2" y="368" width="2.5" height="22.4" fill="#bdeed8"/><rect x="1038.3" y="368" width="2.0" height="22.4" fill="#cf2d5c"/><rect x="1040.9" y="368" width="2.0" height="22.4" fill="#33b98a"/><rect x="1043.5" y="368" width="1.2" height="22.4" fill="#bdeed8"/><rect x="1045.3" y="368" width="2.0" height="22.4" fill="#f2b088"/><rect x="1047.9" y="368" width="5.0" height="22.4" fill="#33b98a"/><rect x="1053.5" y="368" width="2.0" height="22.4" fill="#cf2d5c"/><rect x="1056.1" y="368" width="2.5" height="22.4" fill="#c8d8d0"/><rect x="1059.2" y="368" width="2.5" height="22.4" fill="#efe8c6"/><rect x="1062.3" y="368" width="3.0" height="22.4" fill="#f5c5d3"/><rect x="1065.9" y="368" width="2.0" height="22.4" fill="#b35ae0"/><rect x="1068.5" y="368" width="2.5" height="22.4" fill="#bdeed8"/><rect x="1071.6" y="368" width="1.5" height="22.4" fill="#b0b3ae"/><rect x="1073.7" y="368" width="2.0" height="22.4" fill="#f2b088"/><rect x="1076.3" y="368" width="1.2" height="22.4" fill="#b8dfe9"/><rect x="1078.1" y="368" width="2.0" height="22.4" fill="#33b98a"/><rect x="1080.7" y="368" width="2.0" height="22.4" fill="#efe8c6"/><rect x="1083.3" y="368" width="2.5" height="22.4" fill="#c8d8d0"/><rect x="1086.4" y="368" width="1.5" height="22.4" fill="#cf2d5c"/><rect x="1088.5" y="368" width="6.0" height="22.4" fill="#33b98a"/><rect x="1095.1" y="368" width="2.0" height="22.4" fill="#efe8c6"/><rect x="1097.7" y="368" width="2.0" height="22.4" fill="#f7f7f2"/><rect x="1100.3" y="368" width="8.0" height="22.4" fill="#33b98a"/><rect x="1108.9" y="368" width="1.2" height="22.4" fill="#b8dfe9"/><rect x="1110.7" y="368" width="1.5" height="22.4" fill="#cf2d5c"/><rect x="1112.8" y="368" width="3.0" height="22.4" fill="#b8dfe9"/><rect x="1116.4" y="368" width="2.0" height="22.4" fill="#33b98a"/><rect x="1119.0" y="368" width="1.2" height="22.4" fill="#bdeed8"/><rect x="1120.8" y="368" width="2.5" height="22.4" fill="#f7f7f2"/><rect x="1123.9" y="368" width="1.2" height="22.4" fill="#d5f5e6"/><rect x="1125.7" y="368" width="1.5" height="22.4" fill="#b0b3ae"/><rect x="1127.8" y="368" width="3.0" height="22.4" fill="#c8d8d0"/><rect x="1131.4" y="368" width="2.5" height="22.4" fill="#e3d0f0"/><rect x="1134.5" y="368" width="1.5" height="22.4" fill="#f2b088"/><rect x="1136.6" y="368" width="2.0" height="22.4" fill="#efe8c6"/><rect x="1139.2" y="368" width="3.0" height="22.4" fill="#33b98a"/><rect x="1142.8" y="368" width="1.5" height="22.4" fill="#bdeed8"/><rect x="1144.9" y="368" width="3.0" height="22.4" fill="#33b98a"/><rect x="1148.5" y="368" width="1.2" height="22.4" fill="#bdeed8"/><rect x="1150.3" y="368" width="2.5" height="22.4" fill="#33b98a"/><rect x="1153.4" y="368" width="2.0" height="22.4" fill="#cf2d5c"/><rect x="1156.0" y="368" width="5.0" height="22.4" fill="#33b98a"/><rect x="1161.6" y="368" width="2.0" height="22.4" fill="#efe8c6"/><rect x="1164.2" y="368" width="2.5" height="22.4" fill="#d5f5e6"/><rect x="1167.3" y="368" width="1.2" height="22.4" fill="#bdeed8"/><rect x="1169.1" y="368" width="3.5" height="22.4" fill="#33b98a"/><rect x="1173.2" y="368" width="2.0" height="22.4" fill="#f5c5d3"/><rect x="1175.8" y="368" width="8.0" height="22.4" fill="#33b98a"/><rect x="1184.4" y="368" width="1.5" height="22.4" fill="#d5f5e6"/><rect x="1186.5" y="368" width="8.0" height="22.4" fill="#33b98a"/><rect x="1195.1" y="368" width="1.5" height="22.4" fill="#b8dfe9"/><rect x="1197.2" y="368" width="1.5" height="22.4" fill="#d5f5e6"/><rect x="1199.3" y="368" width="3.0" height="22.4" fill="#b8dfe9"/><rect x="1202.9" y="368" width="2.5" height="22.4" fill="#bdeed8"/><rect x="1206.0" y="368" width="2.0" height="22.4" fill="#33b98a"/><rect x="1208.6" y="368" width="1.2" height="22.4" fill="#f5c5d3"/><rect x="1210.4" y="368" width="1.2" height="22.4" fill="#c8d8d0"/><rect x="1212.2" y="368" width="2.5" height="22.4" fill="#33b98a"/><rect x="1215.3" y="368" width="2.0" height="22.4" fill="#d5f5e6"/><rect x="1217.9" y="368" width="6.0" height="22.4" fill="#33b98a"/><rect x="1224.5" y="368" width="1.5" height="22.4" fill="#bdeed8"/><rect x="1226.6" y="368" width="8.0" height="22.4" fill="#33b98a"/><rect x="1235.2" y="368" width="1.2" height="22.4" fill="#cf2d5c"/><rect x="1237.0" y="368" width="2.0" height="22.4" fill="#b0b3ae"/><rect x="1239.6" y="368" width="1.5" height="22.4" fill="#efe8c6"/><rect x="1241.7" y="368" width="1.2" height="22.4" fill="#cf2d5c"/><rect x="1243.5" y="368" width="2.5" height="22.4" fill="#f7f7f2"/><rect x="1246.6" y="368" width="1.5" height="22.4" fill="#d5f5e6"/><rect x="1248.7" y="368" width="5.0" height="22.4" fill="#33b98a"/><rect x="1254.3" y="368" width="1.5" height="22.4" fill="#bdeed8"/><rect x="1256.4" y="368" width="1.6" height="22.4" fill="#33b98a"/><line x1="479.6" y1="516.4" x2="1259" y2="516.4" stroke="#3d4146" stroke-width="1"/><text x="471.4" y="519.0" font-size="7.5" fill="#dadcde" text-anchor="end">100</text><line x1="479.6" y1="552.1" x2="1259" y2="552.1" stroke="#3d4146" stroke-width="1"/><text x="471.4" y="554.8" font-size="7.5" fill="#dadcde" text-anchor="end">75</text><line x1="479.6" y1="587.9" x2="1259" y2="587.9" stroke="#3d4146" stroke-width="1"/><text x="471.4" y="590.5" font-size="7.5" fill="#dadcde" text-anchor="end">50</text><line x1="479.6" y1="623.6" x2="1259" y2="623.6" stroke="#3d4146" stroke-width="1"/><text x="471.4" y="626.2" font-size="7.5" fill="#dadcde" text-anchor="end">25</text><line x1="479.6" y1="659.4" x2="1259" y2="659.4" stroke="#3d4146" stroke-width="1"/><text x="471.4" y="662.0" font-size="7.5" fill="#dadcde" text-anchor="end">0</text><text transform="translate(452.5,587.5) rotate(-90)" font-size="7" fill="#b9bbbe" text-anchor="middle">Percent</text><line x1="479.6" y1="556.7" x2="994" y2="556.7" stroke="#a9aaac" stroke-width="1.8"/><path d="M502.0 659.4 V553.2 Q502.0 552.2 503.0 552.2 H527.0 Q528.0 552.2 528.0 553.2 V659.4 Z" fill="#03a9f4"/><line x1="515.0" y1="659.4" x2="515.0" y2="664" stroke="#3d4146" stroke-width="1"/><text x="515.0" y="674" font-size="6.3" font-weight="bold" fill="#dadcde" text-anchor="middle">12:00</text><path d="M572.2 659.4 V555.6 Q572.2 554.6 573.2 554.6 H597.2 Q598.2 554.6 598.2 555.6 V659.4 Z" fill="#03a9f4"/><line x1="585.2" y1="659.4" x2="585.2" y2="664" stroke="#3d4146" stroke-width="1"/><text x="585.2" y="674" font-size="6.3" font-weight="bold" fill="#dadcde" text-anchor="middle">13:00</text><path d="M642.4 659.4 V560.8 Q642.4 559.8 643.4 559.8 H667.4 Q668.4 559.8 668.4 560.8 V659.4 Z" fill="#d32f2f"/><line x1="655.4" y1="659.4" x2="655.4" y2="664" stroke="#3d4146" stroke-width="1"/><text x="655.4" y="674" font-size="6.3" font-weight="bold" fill="#dadcde" text-anchor="middle">14:00</text><path d="M712.6 659.4 V560.8 Q712.6 559.8 713.6 559.8 H737.6 Q738.6 559.8 738.6 560.8 V659.4 Z" fill="#d32f2f"/><line x1="725.6" y1="659.4" x2="725.6" y2="664" stroke="#3d4146" stroke-width="1"/><text x="725.6" y="674" font-size="6.3" font-weight="bold" fill="#dadcde" text-anchor="middle">15:00</text><path d="M782.8 659.4 V550.6 Q782.8 549.6 783.8 549.6 H807.8 Q808.8 549.6 808.8 550.6 V659.4 Z" fill="#03a9f4"/><line x1="795.8" y1="659.4" x2="795.8" y2="664" stroke="#3d4146" stroke-width="1"/><text x="795.8" y="674" font-size="6.3" font-weight="bold" fill="#dadcde" text-anchor="middle">16:00</text><path d="M853.0 659.4 V555.7 Q853.0 554.7 854.0 554.7 H878.0 Q879.0 554.7 879.0 555.7 V659.4 Z" fill="#03a9f4"/><line x1="866.0" y1="659.4" x2="866.0" y2="664" stroke="#3d4146" stroke-width="1"/><text x="866.0" y="674" font-size="6.3" font-weight="bold" fill="#dadcde" text-anchor="middle">17:00</text><path d="M923.2 659.4 V555.0 Q923.2 554.0 924.2 554.0 H948.2 Q949.2 554.0 949.2 555.0 V659.4 Z" fill="#03a9f4"/><line x1="936.2" y1="659.4" x2="936.2" y2="664" stroke="#3d4146" stroke-width="1"/><text x="936.2" y="674" font-size="6.3" font-weight="bold" fill="#dadcde" text-anchor="middle">18:00</text><path d="M993.4 659.4 V547.4 Q993.4 546.4 994.4 546.4 H1018.4 Q1019.4 546.4 1019.4 547.4 V659.4 Z" fill="#03a9f4"/><line x1="1006.4" y1="659.4" x2="1006.4" y2="664" stroke="#3d4146" stroke-width="1"/><text x="1006.4" y="674" font-size="6.3" font-weight="bold" fill="#dadcde" text-anchor="middle">19:00</text><path d="M1063.6 659.4 V560.5 Q1063.6 559.5 1064.6 559.5 H1088.6 Q1089.6 559.5 1089.6 560.5 V659.4 Z" fill="#d32f2f"/><line x1="1076.6" y1="659.4" x2="1076.6" y2="664" stroke="#3d4146" stroke-width="1"/><text x="1076.6" y="674" font-size="6.3" font-weight="bold" fill="#dadcde" text-anchor="middle">20:00</text><path d="M1133.8 659.4 V556.3 Q1133.8 555.3 1134.8 555.3 H1158.8 Q1159.8 555.3 1159.8 556.3 V659.4 Z" fill="#03a9f4"/><line x1="1146.8" y1="659.4" x2="1146.8" y2="664" stroke="#3d4146" stroke-width="1"/><text x="1146.8" y="674" font-size="6.3" font-weight="bold" fill="#dadcde" text-anchor="middle">21:00</text><path d="M1204.0 659.4 V558.0 Q1204.0 557.0 1205.0 557.0 H1229.0 Q1230.0 557.0 1230.0 558.0 V659.4 Z" fill="#d32f2f"/><line x1="1217.0" y1="659.4" x2="1217.0" y2="664" stroke="#3d4146" stroke-width="1"/><text x="1217.0" y="674" font-size="6.3" font-weight="bold" fill="#dadcde" text-anchor="middle">22:00</text></svg>
</body></html>
